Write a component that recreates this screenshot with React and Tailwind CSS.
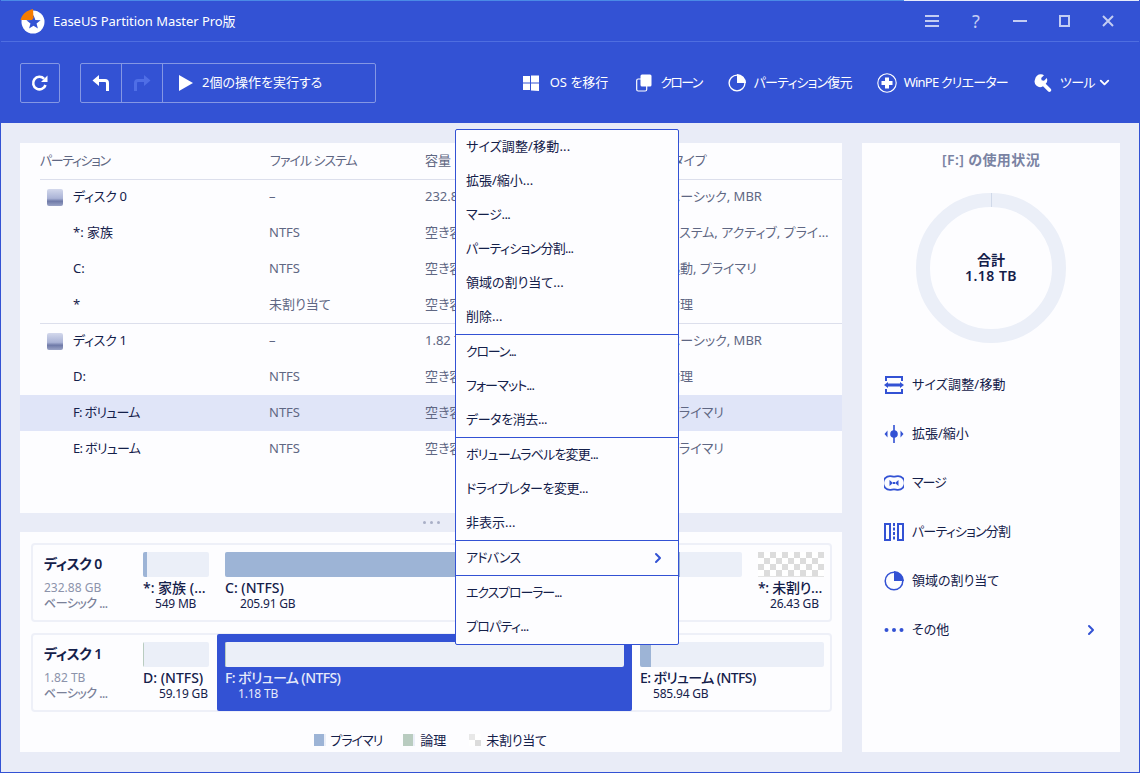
import React from "react";
import { ChevronRight, ChevronDown } from "lucide-react";

const JP = "font-['Noto_Sans','Noto_Sans_CJK_JP',sans-serif] [font-feature-settings:'palt']";

function Logo() {
  return (
    <svg width="26" height="26" viewBox="0 0 26 26">
      <circle cx="13" cy="14" r="11.500" fill="#fff" />
      <path d="M13.500 7l1.880 4.910 5.250.27-4.090 3.310 1.370 5.080-4.410-2.870-4.410 2.870 1.370-5.080-4.090-3.310 5.250-.27z" fill="#3352d4" />
      <path d="M0.500 12C1.500 7 6 2.500 13 1l.5 9-1.500 2z" fill="#f57c00" />
    </svg>
  );
}
function Refresh() {
  return (
    <svg width="20" height="20" viewBox="0 0 20 20" fill="none">
      <path d="M15.500 12a6.300 6.300 0 1 1-1.400-6.200" stroke="#fff" strokeWidth="2.600" />
      <path d="M17.500 2.500v6.500h-6.500z" fill="#fff" />
    </svg>
  );
}
function Undo({ color = "#fff", flip = false }) {
  return (
    <svg width="20" height="18" viewBox="0 0 20 18" fill="none" className={flip ? "-scale-x-100" : ""}>
      <path d="M1.500 6.500 8 1v4h6a4 4 0 0 1 4 4v8h-3V9a1 1 0 0 0-1-1H8v4z" fill={color} />
    </svg>
  );
}
function Win() {
  return (
    <svg width="16" height="16" viewBox="0 0 16 16" fill="#fff">
      <path d="M0 1h7v6.500H0zM8 0.500h8v7H8zM0 8.500h7V15H0zM8 8.500h8v7.500l-8-.5z" />
    </svg>
  );
}
function Clone() {
  return (
    <svg width="16" height="18" viewBox="0 0 16 18" fill="none">
      <rect x="0.700" y="5" width="10" height="12" rx="1.500" stroke="#fff" strokeWidth="1.200" />
      <rect x="4.500" y="0.500" width="11" height="12" rx="1.500" fill="#fff" />
    </svg>
  );
}
function Pie({ color = "#fff", size = 18 }) {
  return (
    <svg width={size} height={size} viewBox="0 0 20 20" fill="none">
      <circle cx="10" cy="10" r="8.800" stroke={color} strokeWidth="1.500" />
      <path d="M10 0a10 10 0 0 1 10 10H10z" fill={color} />
    </svg>
  );
}
function WinPE() {
  return (
    <svg width="20" height="20" viewBox="0 0 20 20" fill="none">
      <circle cx="10" cy="10" r="9.200" stroke="#fff" strokeWidth="1.100" />
      <path d="M8 4.500h4V8h3.500v4H12v3.500H8V12H4.500V8H8z" fill="#fff" />
    </svg>
  );
}
function Wrench() {
  return (
    <svg width="18" height="18" viewBox="0 0 18 18">
      <path d="M7 0.300a5.500 5.500 0 0 1 3 .9L7.200 4l.4 2.300 2.400.5 2.800-2.900a5.500 5.500 0 0 1-1.100 5.900l5 5c1 1 .6 2-.1 2.600-.8.600-1.700.8-2.600-.1l-5-5.100A5.500 5.500 0 0 1 1 5.500 5.800 5.800 0 0 1 7 .3z" fill="#fff" />
    </svg>
  );
}
function DiskIcon() {
  return (
    <div className="h-[17px] w-4 rounded-[2px] bg-[linear-gradient(#d3d8ec,#aab3d6_55%,#6f7aa8_72%,#9aa3c6)]" />
  );
}
const B = "#3352d4";
function IconResize() {
  return (
    <svg width="20" height="18" viewBox="0 0 20 18" fill="none">
      <path d="M2 5V1h16v4M2 13v4h16v-4" stroke={B} strokeWidth="2" />
      <path d="M0 9l4-3v1.500h12V6l4 3-4 3v-1.500H4V12z" fill={B} />
    </svg>
  );
}
function IconExtend() {
  return (
    <svg width="20" height="18" viewBox="0 0 20 18" fill={B}>
      <rect x="9.200" y="0" width="1.600" height="18" />
      <circle cx="10" cy="9" r="3.800" />
      <path d="M0.500 9 3.500 5.500v7zM19.500 9 16.500 5.500v7z" />
    </svg>
  );
}
function IconMerge() {
  return (
    <svg width="20" height="16" viewBox="0 0 20 16" fill="none">
      <path d="M6 1.200c1.500 0 2.500.5 4 .5s2.500-.5 4-.5a6.800 6.800 0 0 1 0 13.600c-1.500 0-2.500-.5-4-.5s-2.500.5-4 .5a6.800 6.800 0 0 1 0-13.600z" stroke={B} strokeWidth="1.800" />
      <path d="M5.500 5 9 8l-3.500 3zM14.500 5 11 8l3.500 3z" fill={B} />
      <rect x="9" y="7" width="2" height="2" fill={B} />
    </svg>
  );
}
function IconSplit() {
  return (
    <svg width="20" height="18" viewBox="0 0 20 18" fill="none">
      <rect x="1" y="1" width="5" height="16" stroke={B} strokeWidth="2" />
      <rect x="14" y="1" width="5" height="16" stroke={B} strokeWidth="2" />
      <path d="M10 0v18" stroke={B} strokeWidth="2" strokeDasharray="3 1.500" />
    </svg>
  );
}
function IconDots() {
  return (
    <svg width="20" height="6" viewBox="0 0 20 6" fill={B}>
      <circle cx="2.500" cy="3" r="2" />
      <circle cx="10" cy="3" r="2" />
      <circle cx="17.500" cy="3" r="2" />
    </svg>
  );
}

function ToolItem({ icon, label, className = "", t = "" }) {
  return (
    <div className={"flex items-center " + className}>
      {icon}
      <span className={"text-[13px] text-white " + t}>{label}</span>
    </div>
  );
}

const rows = [
  { n: "ディスク 0", f: "–", c: "232.88 GB", t: "ベーシック, MBR", disk: true, ft: "tracking-[-0.3px]" },
  { n: "*: 家族", f: "NTFS", c: "空き容量: 448 MB", t: "システム, アクティブ, プライ…" },
  { n: "C:", f: "NTFS", c: "空き容量: 120.4 GB", t: "起動, プライマリ" },
  { n: "*", f: "未割り当て", c: "空き容量: 26.43 GB", t: "論理", line: true },
  { n: "ディスク 1", f: "–", c: "1.82 TB", t: "ベーシック, MBR", disk: true, ft: "tracking-[-0.3px]" },
  { n: "D:", f: "NTFS", c: "空き容量: 58.9 GB", t: "論理" },
  { n: "F: ボリューム", f: "NTFS", c: "空き容量: 1.1 TB", t: "プライマリ", sel: true, ft: "tracking-[-0.7px]" },
  { n: "E: ボリューム", f: "NTFS", c: "空き容量: 500 GB", t: "プライマリ", ft: "tracking-[-0.7px]" },
];

function Row({ r }) {
  return (
    <div className={"flex h-9 items-center text-[13px] " + (r.sel ? "bg-[#e0e5f8]" : "")}>
      <div className="flex w-[249px] shrink-0 items-center pl-[27px] text-[#14204a]">
        <div className="w-[26px] shrink-0">{r.disk && <DiskIcon />}</div>
        <span className={r.ft || ""}>{r.n}</span>
      </div>
      <div className="w-[156px] shrink-0 text-[#5f6783]">{r.f}</div>
      <div className="w-[242px] shrink-0 overflow-hidden whitespace-nowrap text-[#5f6783]">{r.c}</div>
      <div className="min-w-0 flex-1 whitespace-nowrap text-[#5f6783]">{r.t}</div>
    </div>
  );
}

function Part({ w, fill, fillColor = "#9db4d6", name, nameT = "", size, sizeIndent, sel, checker }) {
  return (
    <div className={"shrink-0 px-2 " + w + (sel ? " -my-px rounded-[2px] bg-[#3352d4] pt-2" : " pt-[7px]")}>
      {checker ? (
        <div className="h-[25px] border-b border-[#e4e4e4] bg-[conic-gradient(#ffffff_25%,#dcdcdc_0_50%,#ffffff_0_75%,#dcdcdc_0)] bg-[length:12px_12px]" />
      ) : (
        <div className="h-[25px] overflow-hidden rounded-[2px] bg-[#ebeff8]">
          <div className="h-full" style={{ width: fill, background: fillColor }} />
        </div>
      )}
      <div className={"mt-[2px] whitespace-nowrap text-sm font-medium leading-[17px] " + nameT + (sel ? " text-[#e6eafa]" : " text-[#14204a]")}>{name}</div>
      <div className={"whitespace-nowrap text-xs leading-[16px] tracking-[-0.2px] " + sizeIndent + (sel ? " text-[#e6eafa]" : " text-[#14204a]")}>{size}</div>
    </div>
  );
}

function DiskCard({ name, size, children, className = "" }) {
  return (
    <div className={"flex h-[79px] rounded-[4px] border-2 border-[#eef0f8] " + className}>
      <div className="w-[102px] shrink-0 pl-[11px] pt-[9px]">
        <div className="text-sm font-semibold leading-5 tracking-[-0.5px] text-[#14204a]">{name}</div>
        <div className="mt-[6px] text-xs leading-[16px] text-[#8c93ab]">{size}</div>
        <div className="text-xs font-medium leading-[16px] tracking-[-0.5px] text-[#7a8199]">ベーシック ...</div>
      </div>
      {children}
    </div>
  );
}

function MenuItem({ children, right, t = "" }) {
  return (
    <div className="flex h-[34px] items-center justify-between pl-[10px] pr-3 text-[13px] text-[#14204a]">
      <span className={t}>{children}</span>
      {right}
    </div>
  );
}

function Action({ icon, label, right, t = "" }) {
  return (
    <div className="flex h-[49px] items-center pl-[22px] pr-[21px]">
      <div className="flex w-[28px] shrink-0 items-center">{icon}</div>
      <span className={"flex-1 text-[13px] text-[#14204a] " + t}>{label}</span>
      {right}
    </div>
  );
}

export default function App() {
  return (
    <div className={"relative flex h-[773px] w-[1140px] flex-col overflow-hidden bg-[#e9ecf7] " + JP}>
      {/* header */}
      <div className="shrink-0 bg-[#3352d4]">
        <div className="flex h-px">
          <div className="w-[904px] bg-[#4a8ae6]" />
          <div className="flex-1 bg-[#e6ebfb]" />
        </div>
        <div className="flex h-[41px] items-center border-b border-b-[#4f6ee0] pl-5 pr-[10px]">
          <Logo />
          <span className="ml-[7px] pt-px text-[13px] tracking-[-0.05px] text-white">EaseUS Partition Master Pro版</span>
          <div className="ml-auto flex items-center">
            <div className="flex w-11 justify-center">
              <svg width="14" height="12" viewBox="0 0 14 12" fill="#c3cdf3"><rect width="14" height="2" /><rect y="5" width="14" height="2" /><rect y="10" width="14" height="2" /></svg>
            </div>
            <div className="w-11 text-center text-lg leading-none text-[#c3cdf3]">?</div>
            <div className="flex w-11 justify-center"><div className="h-[2px] w-[14px] bg-[#c3cdf3]" /></div>
            <div className="flex w-11 justify-center"><div className="h-3 w-[11px] border-2 border-[#c3cdf3]" /></div>
            <div className="flex w-11 justify-center">
              <svg width="14" height="14" viewBox="0 0 14 14" stroke="#c3cdf3" strokeWidth="2"><path d="M2 2l10 10M12 2L2 12" /></svg>
            </div>
          </div>
        </div>
        <div className="flex h-[81px] items-center pl-5 pr-[28px]">
          <div className="flex h-10 w-10 items-center justify-center rounded-[2px] border border-[#8497e4]"><Refresh /></div>
          <div className="ml-5 flex h-10 w-[296px] rounded-[2px] border border-[#8497e4]">
            <div className="flex w-[41px] items-center justify-center border-r border-[#8497e4]"><Undo /></div>
            <div className="flex w-[41px] items-center justify-center border-r border-[#8497e4]"><Undo color="#4f6ee6" flip /></div>
            <div className="flex items-center pl-4 text-[13px] text-white">
              <svg width="14" height="16" viewBox="0 0 14 16" fill="#fff"><path d="M0 0l14 8-14 8z" /></svg>
              <span className="ml-[9px]">2個の操作を実行する</span>
            </div>
          </div>
          <div className="ml-auto flex items-center">
            <ToolItem icon={<span className="mr-[11px]"><Win /></span>} label="OS を移行" />
            <ToolItem className="ml-[28px]" t="tracking-[-1.7px]" icon={<span className="mr-2"><Clone /></span>} label="クローン" />
            <ToolItem className="ml-[26px]" t="tracking-[-0.8px]" icon={<span className="mr-2"><Pie /></span>} label="パーティション復元" />
            <ToolItem className="ml-[25px]" t="tracking-[-0.8px]" icon={<span className="mr-[7px]"><WinPE /></span>} label="WinPE クリエーター" />
            <ToolItem className="ml-[26px]" t="tracking-[-0.6px]" icon={<span className="mr-2"><Wrench /></span>} label="ツール" />
            <ChevronDown className="ml-[2px] text-white" size={15} strokeWidth={3} />
          </div>
        </div>
      </div>

      {/* body */}
      <div className="flex flex-1 gap-5 px-5 pb-[21px] pt-5">
        <div className="flex w-[822px] shrink-0 flex-col">
          <div className="h-[370px] bg-[#fdfdff]">
            <div className="flex h-[36px] items-center text-[13px] text-[#5f6783]">
              <div className="w-[249px] shrink-0 pl-5 tracking-[-1.4px]">パーティション</div>
              <div className="w-[156px] shrink-0 pl-px tracking-[-1px]">ファイル システム</div>
              <div className="w-[242px] shrink-0">容量</div>
              <div className="pl-[5px]">タイプ</div>
            </div>
            <div className="relative z-10 -mb-px ml-5 h-px bg-[#dcdfec]" />
            {rows.map((r) => (
              <React.Fragment key={r.n}>
                <Row r={r} />
                {r.line && <div className="relative z-10 -mb-px ml-5 h-px bg-[#dcdfec]" />}
              </React.Fragment>
            ))}
          </div>
          <div className="flex h-[19px] items-center justify-center gap-1">
            <span className="h-[3px] w-[3px] rounded-full bg-[#a9afc6]" />
            <span className="h-[3px] w-[3px] rounded-full bg-[#a9afc6]" />
            <span className="h-[3px] w-[3px] rounded-full bg-[#a9afc6]" />
          </div>
          <div className="flex h-[220px] flex-col bg-[#fdfdff] pl-[11px] pr-[10px] pt-[11px]">
            <DiskCard name="ディスク 0" size="232.88 GB">
              <Part w="w-[82px]" fill="4px" name="*: 家族 (…" size="549 MB" sizeIndent="pl-3" />
              <Part w="w-[533px]" fill="88%" name="C: (NTFS)" size="205.91 GB" sizeIndent="pl-[15px]" />
              <Part w="w-[82px]" fill="0" name="*: 未割り…" nameT="tracking-[-0.3px]" size="26.43 GB" sizeIndent="pl-3" checker />
            </DiskCard>
            <DiskCard name="ディスク 1" size="1.82 TB" className="mt-[11px]">
              <Part w="w-[82px]" fill="1px" fillColor="#b9ccc0" name="D: (NTFS)" size="59.19 GB" sizeIndent="pl-4" />
              <Part w="w-[415px]" fill="1px" fillColor="#b9ccc0" name="F: ボリューム (NTFS)" nameT="tracking-[-0.6px]" size="1.18 TB" sizeIndent="pl-[13px]" sel />
              <Part w="w-[200px]" fill="11px" name="E: ボリューム (NTFS)" nameT="tracking-[-0.6px]" size="585.94 GB" sizeIndent="pl-[13px]" />
            </DiskCard>
            <div className="mt-[19px] flex items-center justify-center pr-[2px] text-[13px] leading-[18px] text-[#14204a]">
              <span className="h-3 w-3 bg-[linear-gradient(90deg,#9db4d6_80%,#ebeff8_80%)]" />
              <span className="ml-1 tracking-[-1px]">プライマリ</span>
              <span className="ml-[21px] h-3 w-3 bg-[linear-gradient(90deg,#b9ccc0_80%,#ebeff8_80%)]" />
              <span className="ml-[5px]">論理</span>
              <span className="ml-[23px] h-3 w-3 bg-[conic-gradient(#ffffff_25%,#dcdcdc_0_50%,#ffffff_0_75%,#e8e8e8_0)]" />
              <span className="ml-[5px] tracking-[-0.3px]">未割り当て</span>
            </div>
          </div>
        </div>

        <div className="flex w-[258px] shrink-0 flex-col bg-[#fdfdff]">
          <div className="pt-[7px] text-center text-sm font-semibold leading-5 tracking-[0.4px] text-[#7a83a3]">[F:] の使用状況</div>
          <div className="relative mx-auto mt-[23px] flex h-[150px] w-[150px] flex-col items-center justify-center rounded-full border-[14px] border-[#ebeff8] pb-[3px] text-[#14204a]">
            <span className="absolute -top-[14px] left-1/2 h-[14px] w-px bg-[#d0d9e9]" />
            <div className="text-sm font-semibold leading-[17px]">合計</div>
            <div className="text-sm font-semibold leading-[15px] tracking-[0.5px]">1.18 TB</div>
          </div>
          <div className="mt-[17px]">
            <Action icon={<IconResize />} label="サイズ調整/移動" t="tracking-[0.2px]" />
            <Action icon={<IconExtend />} label="拡張/縮小" />
            <Action icon={<IconMerge />} label="マージ" t="tracking-[-1px]" />
            <Action icon={<IconSplit />} label="パーティション分割" t="tracking-[-0.8px]" />
            <Action icon={<Pie color={B} size={20} />} label="領域の割り当て" />
            <Action icon={<IconDots />} label="その他" right={<ChevronRight className="text-[#3352d4]" size={16} strokeWidth={3} />} />
          </div>
        </div>
      </div>

      {/* context menu */}
      <div className="absolute left-[455px] top-[129px] z-20 w-[224px] rounded-[2px] border border-[#3352d4] bg-[#fdfdff]">
        <div className="border-b border-[#3352d4]">
          <MenuItem t="tracking-[0.15px]">サイズ調整/移動...</MenuItem>
          <MenuItem>拡張/縮小...</MenuItem>
          <MenuItem t="tracking-[-0.5px]">マージ...</MenuItem>
          <MenuItem t="tracking-[-0.7px]">パーティション分割...</MenuItem>
          <MenuItem>領域の割り当て...</MenuItem>
          <MenuItem>削除...</MenuItem>
        </div>
        <div className="border-b border-[#3352d4]">
          <MenuItem t="tracking-[-1.3px]">クローン...</MenuItem>
          <MenuItem t="tracking-[-0.9px]">フォーマット...</MenuItem>
          <MenuItem t="tracking-[-0.4px]">データを消去...</MenuItem>
        </div>
        <div className="border-b border-[#3352d4]">
          <MenuItem t="tracking-[-0.8px]">ボリュームラベルを変更...</MenuItem>
          <MenuItem t="tracking-[-0.5px]">ドライブレターを変更...</MenuItem>
          <MenuItem>非表示...</MenuItem>
        </div>
        <div className="border-b border-[#3352d4]">
          <MenuItem t="tracking-[-0.8px]" right={<ChevronRight className="text-[#3352d4]" size={16} strokeWidth={3} />}>アドバンス</MenuItem>
        </div>
        <MenuItem t="tracking-[-1.1px]">エクスプローラー...</MenuItem>
        <MenuItem t="tracking-[-0.75px]">プロパティ...</MenuItem>
      </div>

      {/* window frame */}
      <div className="pointer-events-none absolute inset-0 z-30 border-x border-b border-[#3352d4]" />
    </div>
  );
}
